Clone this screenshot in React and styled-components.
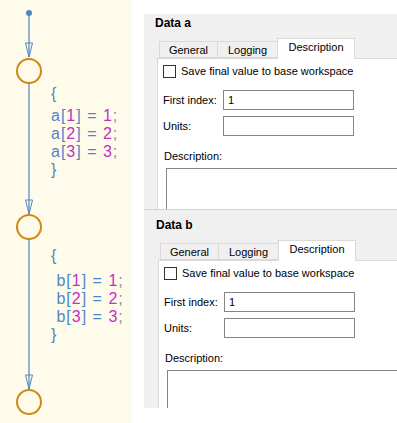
import styled, { createGlobalStyle } from 'styled-components';

const BLUE = '#4f86c6';
const ORANGE = '#cf8a14';
const MAGENTA = '#c32fc3';

const GlobalStyle = createGlobalStyle`
    html, body {
        margin: 0;
        padding: 0;
        overflow: hidden;
        background: #ffffff;
        font-family: 'Liberation Sans', Arial, sans-serif;
    }
`;

const Page = styled.div`
    display: flex;
    flex-direction: row;
    width: 397px;
    height: 423px;
`;

const Chart = styled.div`
    position: relative;
    width: 132px;
    height: 423px;
    flex-shrink: 0;
    background: #fffbea;
`;

const ChartDrawing = styled.svg`
    display: block;
`;

const CodeBlock = styled.div`
    position: absolute;
    left: 51px;
    top: ${({ top }) => top}px;
    font-size: 16px;
    line-height: 18px;
    letter-spacing: 1px;
    white-space: pre;
    color: ${BLUE};
`;

const CodeLine = styled.div`
    margin-bottom: ${({ gap }) => gap || 0}px;
`;

const Num = styled.span`
    color: ${MAGENTA};
`;

const Semi = styled.span`
    color: #7d93b4;
`;

const Side = styled.div`
    flex: 1;
    min-width: 0;
    overflow: hidden;
    padding: 14px 0 0 12px;
    display: flex;
    flex-direction: column;
`;

const Panel = styled.div`
    width: 280px;
    height: ${({ height }) => height}px;
    box-sizing: border-box;
    overflow: hidden;
    background: #f0f0f0;
    padding: ${({ top }) => top}px 0 0 ${({ inset }) => inset}px;
    border-top: ${({ divider }) => (divider ? '1px solid #d2d2d2' : 'none')};
    color: #000;
`;

const Title = styled.div`
    padding-left: 11px;
    font-size: 12px;
    font-weight: bold;
    line-height: 14px;
    margin-bottom: 8px;
`;

const TabStrip = styled.div`
    display: flex;
    align-items: flex-end;
    height: 20px;
    margin-left: 15px;
    position: relative;
    z-index: 1;
`;

const Tab = styled.div`
    box-sizing: border-box;
    width: ${({ width }) => width}px;
    height: ${({ selected }) => (selected ? 21 : 17)}px;
    margin-bottom: ${({ selected }) => (selected ? -1 : 0)}px;
    margin-left: ${({ first }) => (first ? 0 : -1)}px;
    border: 1px solid #d9d9d9;
    border-bottom: ${({ selected }) => (selected ? 'none' : '1px solid #d9d9d9')};
    background: ${({ selected }) => (selected ? '#ffffff' : '#f0f0f0')};
    font-size: 11px;
    line-height: ${({ selected }) => (selected ? 16 : 17)}px;
    text-align: center;
`;

const Pane = styled.div`
    margin-left: 13px;
    border: 1px solid #d9d9d9;
    background: #ffffff;
    padding: 6px 0 0 5px;
    height: 240px;
    font-size: 11px;
`;

const CheckRow = styled.label`
    display: flex;
    align-items: center;
    gap: 5px;
    height: 13px;
    line-height: 13px;
`;

const Box = styled.span`
    display: inline-block;
    box-sizing: border-box;
    width: 13px;
    height: 13px;
    border: 1px solid #333333;
    background: #ffffff;
`;

const Form = styled.div`
    display: grid;
    grid-template-columns: 60px 131px;
    grid-auto-rows: 20px;
    row-gap: 6px;
    align-items: center;
    margin-top: 12px;
`;

const Field = styled.div`
    box-sizing: border-box;
    height: 20px;
    border: 1px solid #858585;
    background: #ffffff;
    padding-left: 4px;
    line-height: 18px;
`;

const DescLabel = styled.div`
    margin: 14px 0 5px 1px;
    line-height: 13px;
`;

const DescArea = styled.div`
    margin-left: 3px;
    height: 80px;
    border: 1px solid #858585;
    border-right: none;
    background: #ffffff;
`;

const Arrow = ({ top }) => (
    <polygon
        points={`25.5,${top} 32.5,${top} 29,${top + 14}`}
        fill='none'
        stroke={BLUE}
        strokeWidth='1'
    />
);

const State = ({ cy }) => (
    <circle cx='29' cy={cy} r='12' fill='none' stroke={ORANGE} strokeWidth='2' />
);

const Assignment = ({ name, index, indent }) => (
    <CodeLine>
        {indent ? ' ' : ''}
        {name}[<Num>{index}</Num>] = <Num>{index}</Num>
        <Semi>;</Semi>
    </CodeLine>
);

const Code = ({ name, top, gap, indent }) => (
    <CodeBlock top={top}>
        <CodeLine gap={gap}>{'{'}</CodeLine>
        {[1, 2, 3].map((i) => (
            <Assignment key={i} name={name} index={i} indent={indent} />
        ))}
        <CodeLine>{'}'}</CodeLine>
    </CodeBlock>
);

const DataPanel = ({ name, height, top, inset, divider }) => (
    <Panel height={height} top={top} inset={inset} divider={divider}>
        <Title>Data {name}</Title>
        <TabStrip>
            <Tab width={59} first>General</Tab>
            <Tab width={61}>Logging</Tab>
            <Tab width={78} selected>Description</Tab>
        </TabStrip>
        <Pane>
            <CheckRow>
                <Box />
                Save final value to base workspace
            </CheckRow>
            <Form>
                <span>First index:</span>
                <Field>1</Field>
                <span>Units:</span>
                <Field />
            </Form>
            <DescLabel>Description:</DescLabel>
            <DescArea />
        </Pane>
    </Panel>
);

const App = () => (
    <>
        <GlobalStyle />
        <Page>
            <Chart>
                <ChartDrawing width='132' height='423'>
                    <circle cx='29' cy='13' r='3' fill={BLUE} />
                    <g stroke={BLUE} strokeWidth='1.2'>
                        <line x1='29' y1='13' x2='29' y2='57' />
                        <line x1='29' y1='83' x2='29' y2='214' />
                        <line x1='29' y1='239' x2='29' y2='389' />
                    </g>
                    <Arrow top={43} />
                    <Arrow top={200} />
                    <Arrow top={375} />
                    <State cy={71} />
                    <State cy={227} />
                    <State cy={402} />
                </ChartDrawing>
                <Code name='a' top={85} gap={4} />
                <Code name='b' top={247} gap={7} indent />
            </Chart>
            <Side>
                <DataPanel name='a' height={195} top={2} inset={0} />
                <DataPanel name='b' height={199} top={8} inset={1} divider />
            </Side>
        </Page>
    </>
);

export default App;
